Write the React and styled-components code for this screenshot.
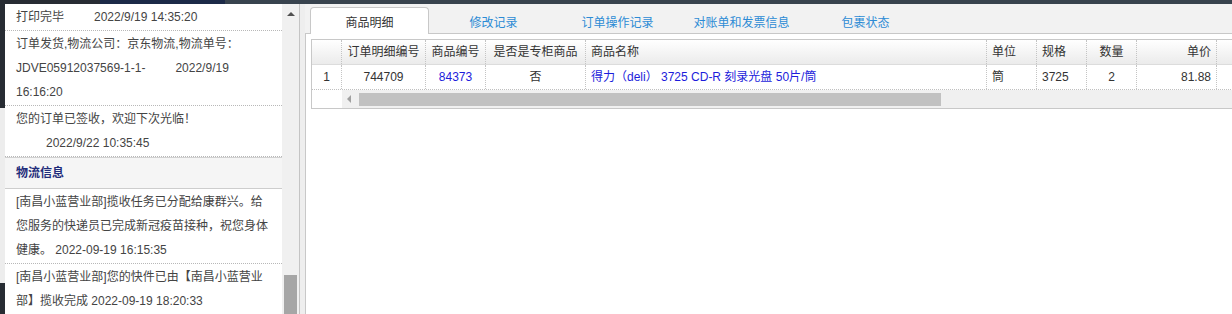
import React from 'react'
import styled, { createGlobalStyle } from 'styled-components'

const GlobalStyle = createGlobalStyle`
  html, body {
    margin: 0;
    padding: 0;
    background: #fff;
    overflow: hidden;
  }
  body {
    font-family: "Liberation Sans", "Noto Sans CJK SC", sans-serif;
    font-size: 12px;
  }
`

const logs = [
  { text: '打印完毕', time: '2022/9/19 14:35:20' },
  { text: '订单发货,物流公司：京东物流,物流单号：JDVE05912037569-1-1-', time: '2022/9/19 16:16:20' },
  { text: '您的订单已签收，欢迎下次光临！', time: '2022/9/22 10:35:45' },
]

const tracks = [
  '[南昌小蓝营业部]揽收任务已分配给康群兴。给您服务的快递员已完成新冠疫苗接种，祝您身体健康。 2022-09-19 16:15:35',
  '[南昌小蓝营业部]您的快件已由【南昌小蓝营业部】揽收完成 2022-09-19 18:20:33',
]

const tabs = ['商品明细', '修改记录', '订单操作记录', '对账单和发票信息', '包裹状态']

const columns = [
  { title: '', align: 'center' },
  { title: '订单明细编号', align: 'center' },
  { title: '商品编号', align: 'center' },
  { title: '是否是专柜商品', align: 'center' },
  { title: '商品名称', align: 'left' },
  { title: '单位', align: 'left' },
  { title: '规格', align: 'left' },
  { title: '数量', align: 'center' },
  { title: '单价', align: 'right' },
  { title: '', align: 'left' },
]

const row = ['1', '744709', '84373', '否', '得力（deli） 3725 CD-R 刻录光盘 50片/筒', '筒', '3725', '2', '81.88', '']
const linkCols = [2, 4]

export default function App() {
  return (
    <>
      <GlobalStyle />
      <Page>
        <TopStrip />
        <Main>
          <EdgeStrip />
          <LogPanel>
            <LogList>
              {logs.map((l, i) => (
                <LogEntry key={i}>
                  {l.text}
                  <Stamp>{l.time}</Stamp>
                </LogEntry>
              ))}
              <LogHeader>物流信息</LogHeader>
              {tracks.map((t, i) => (
                <LogEntry key={i}>{t}</LogEntry>
              ))}
            </LogList>
            <VScroll>
              <UpArrow />
              <VThumb />
            </VScroll>
          </LogPanel>
          <Splitter />
          <DetailPanel>
            <TabBar>
              {tabs.map((t, i) => (
                <Tab key={t} $active={i === 0}>{t}</Tab>
              ))}
            </TabBar>
            <TabBody>
              <Grid>
                <HeadRow>
                  {columns.map((c, i) => (
                    <Cell key={i} $align={c.align}>{c.title}</Cell>
                  ))}
                </HeadRow>
                <DataRow>
                  {row.map((v, i) => (
                    <Cell key={i} $align={columns[i].align} $link={linkCols.includes(i)}>{v}</Cell>
                  ))}
                </DataRow>
                <ScrollRow>
                  <Corner />
                  <HTrack>
                    <LeftBtn><LeftArrow /></LeftBtn>
                    <HThumb />
                  </HTrack>
                </ScrollRow>
              </Grid>
            </TabBody>
          </DetailPanel>
        </Main>
      </Page>
    </>
  )
}

const Page = styled.div`
  width: 1232px;
  height: 314px;
  display: flex;
  flex-direction: column;
  overflow: hidden;
`

const TopStrip = styled.div`
  height: 4px;
  flex-shrink: 0;
  background: linear-gradient(to right, #272c33 0 100px, #1c2a48 100px 225px, #38434e 225px);
`

const Main = styled.div`
  flex: 1;
  display: flex;
  min-height: 0;
`

const EdgeStrip = styled.div`
  width: 5px;
  flex-shrink: 0;
  background: linear-gradient(#272c33 0 104px, #ededed 104px 279px, #272c33 279px);
`

const LogPanel = styled.div`
  display: flex;
  flex-shrink: 0;
`

const LogList = styled.div`
  width: 277px;
  overflow: hidden;
  background: #fff;
  color: #444;
`

const LogEntry = styled.div`
  padding: 1px 10px 1px 11px;
  line-height: 24px;
  border-bottom: 1px dotted #b8b8b8;
`

const Stamp = styled.span`
  margin-left: 30px;
`

const LogHeader = styled.div`
  height: 30px;
  line-height: 30px;
  padding-left: 11px;
  background: #f5f5f5;
  border-top: 1px solid #d0d0d0;
  border-bottom: 1px solid #cdcdcd;
  color: #1f2c7a;
  font-weight: bold;
`

const VScroll = styled.div`
  width: 17px;
  background: #f0f0f0;
  display: flex;
  flex-direction: column;
  align-items: center;
  justify-content: space-between;
`

const UpArrow = styled.div`
  margin-top: 8px;
  width: 0;
  height: 0;
  border-left: 4px solid transparent;
  border-right: 4px solid transparent;
  border-bottom: 4px solid #505050;
`

const VThumb = styled.div`
  width: 13px;
  height: 39px;
  background: #a6a6a6;
`

const Splitter = styled.div`
  width: 6px;
  flex-shrink: 0;
  box-sizing: border-box;
  border-left: 1px solid #c4c4c4;
  background: #eeeeee;
`

const DetailPanel = styled.div`
  flex: 1;
  min-width: 0;
  display: flex;
  flex-direction: column;
  background: #f2f2f2;
`

const TabBar = styled.div`
  height: 29px;
  flex-shrink: 0;
  display: flex;
  align-items: flex-end;
  gap: 5px;
  padding-left: 5px;
  border-bottom: 1px solid #c8c8c8;
`

const Tab = styled.div`
  width: 119px;
  height: 27px;
  box-sizing: border-box;
  margin-bottom: -1px;
  display: flex;
  align-items: center;
  justify-content: center;
  border: 1px solid ${p => (p.$active ? '#c8c8c8' : 'transparent')};
  border-bottom: none;
  border-radius: 4px 4px 0 0;
  background: ${p => (p.$active ? '#fff' : 'transparent')};
  color: ${p => (p.$active ? '#333' : '#2c8bd5')};
  font-size: 12px;
`

const TabBody = styled.div`
  flex: 1;
  background: #fff;
  border-left: 1px solid #c8c8c8;
  padding: 5px 0 0 5px;
  overflow: hidden;
`

const Grid = styled.div`
  width: max-content;
  border: 1px solid #c8c8c8;
  border-right: none;
`

const GRID_COLS = '30px 84px 60px 100px 401px 50px 50px 50px 80px 140px'

const HeadRow = styled.div`
  display: grid;
  grid-template-columns: ${GRID_COLS};
  height: 24px;
  border-bottom: 1px solid #dcdcdc;
  background: linear-gradient(#ffffff, #ebebeb);
  color: #333;
`

const DataRow = styled.div`
  display: grid;
  grid-template-columns: ${GRID_COLS};
  height: 24px;
  border-bottom: 1px dotted #c0c0c0;
  background: #fff;
  color: #333;
`

const Cell = styled.div`
  box-sizing: border-box;
  padding: 0 5px;
  line-height: 24px;
  white-space: nowrap;
  overflow: hidden;
  text-align: ${p => p.$align};
  color: ${p => (p.$link ? '#1c1cdb' : 'inherit')};
  border-right: 1px dotted #c4c4c4;
`

const ScrollRow = styled.div`
  display: flex;
  height: 18px;
`

const Corner = styled.div`
  width: 30px;
  background: #fff;
`

const HTrack = styled.div`
  flex: 1;
  display: flex;
  align-items: center;
  background: #f0f0f0;
`

const LeftBtn = styled.div`
  width: 13px;
  height: 18px;
  display: flex;
  align-items: center;
  justify-content: center;
`

const LeftArrow = styled.div`
  width: 0;
  height: 0;
  border-top: 4px solid transparent;
  border-bottom: 4px solid transparent;
  border-right: 4px solid #a0a0a0;
`

const HThumb = styled.div`
  margin-left: 4px;
  width: 582px;
  height: 13px;
  background: #c1c1c1;
`
